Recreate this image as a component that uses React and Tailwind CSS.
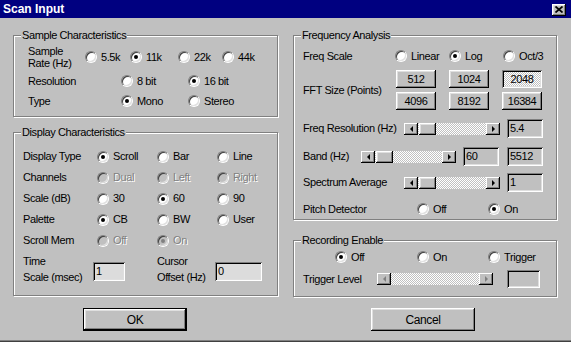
const RAISED =
  "shadow-[inset_-1px_-1px_0_#000,inset_1px_1px_0_#fff,inset_-2px_-2px_0_#808080,inset_2px_2px_0_#dfdfdf]";
const SUNKEN =
  "shadow-[inset_1px_1px_0_#808080,inset_-1px_-1px_0_#fff,inset_2px_2px_0_#000,inset_-2px_-2px_0_#dfdfdf]";
const DITHER =
  "[background-image:repeating-conic-gradient(#fff_0%_25%,#c0c0c0_0%_50%)] [background-size:2px_2px]";
const GREY_TEXT = "text-[#808080] [text-shadow:1px_1px_0_#fff]";

function Radio({ label, checked, disabled, className = "" }) {
  return (
    <div className={"flex items-center gap-[4px] " + className}>
      <span className="relative w-[12px] h-[12px] shrink-0 rounded-full border border-t-[#808080] border-l-[#808080] border-b-white border-r-white">
        <span
          className={
            "absolute inset-0 rounded-full flex items-center justify-center shadow-[inset_1px_1px_0_#404040,inset_-1px_-1px_0_#dfdfdf] " +
            (disabled ? "bg-[#c0c0c0]" : "bg-white")
          }
        >
          {checked && (
            <span
              className={
                "w-[4px] h-[4px] rounded-full " +
                (disabled ? "bg-[#808080]" : "bg-black")
              }
            />
          )}
        </span>
      </span>
      <span className={disabled ? GREY_TEXT : ""}>{label}</span>
    </div>
  );
}

function Group({ title, className = "", children }) {
  return (
    <div
      className={
        "relative border border-[#808080] shadow-[inset_1px_1px_0_#fff,1px_1px_0_#fff] " +
        className
      }
    >
      <span className="absolute left-[7px] -top-[7px] px-[1px] leading-[13px] bg-[#c0c0c0]">
        {title}
      </span>
      {children}
    </div>
  );
}

function Button({ children, pressed, className = "" }) {
  return (
    <div
      className={
        "flex items-center justify-center " +
        (pressed ? SUNKEN + " " + DITHER : RAISED + " bg-[#c0c0c0]") +
        " " +
        className
      }
    >
      {children}
    </div>
  );
}

function Arrow({ dir, disabled }) {
  const tri =
    dir === "left"
      ? "border-y-[3px] border-y-transparent border-r-[3px] " +
        (disabled ? "border-r-[#808080]" : "border-r-black")
      : "border-y-[3px] border-y-transparent border-l-[3px] " +
        (disabled ? "border-l-[#808080]" : "border-l-black");
  return (
    <div
      className={
        "w-[14px] h-full shrink-0 bg-[#c0c0c0] flex items-center justify-center shadow-[inset_-1px_-1px_0_#000,inset_1px_1px_0_#fff,inset_-2px_-2px_0_#808080]"
      }
    >
      <span className={"w-0 h-0 " + tri} />
    </div>
  );
}

function Scroll({ className = "", thumb = true, disabled }) {
  return (
    <div className={"flex h-[12px] " + className}>
      <Arrow dir="left" disabled={disabled} />
      <div className={"flex-1 flex " + DITHER}>
        {thumb && (
          <div className={"w-[17px] h-full ml-[1px] bg-[#c0c0c0] " + RAISED} />
        )}
      </div>
      <Arrow dir="right" disabled={disabled} />
    </div>
  );
}

function Field({ value, className = "" }) {
  return (
    <div className={"flex items-center pl-[3px] " + SUNKEN + " " + className}>
      {value}
    </div>
  );
}

export default function App() {
  return (
    <div className="w-[571px] h-[342px] bg-[#c0c0c0] text-black text-[11px] leading-none tracking-[-0.4px] font-['Liberation_Sans',Arial,sans-serif] overflow-hidden shadow-[inset_0_-1px_0_#404040,inset_0_-2px_0_#808080]">
      {/* title bar */}
      <div className="h-[18px] bg-[#000080] flex items-center justify-between pl-[3px] pr-[5px]">
        <span className="text-white font-bold text-[12px] tracking-normal">
          Scan Input
        </span>
        <div className={"w-[14px] h-[12px] mt-[1px] flex items-center justify-center bg-[#c0c0c0] " + RAISED}>
          <svg width="8" height="7" viewBox="0 0 8 7">
            <path d="M0.5 0.5 L7.5 6.5 M7.5 0.5 L0.5 6.5" stroke="#000" strokeWidth="1.7" />
          </svg>
        </div>
      </div>

      {/* body */}
      <div className="flex items-start gap-[15px] pl-[13px] pt-[17px]">
        {/* left column */}
        <div className="w-[265px] flex flex-col">
          <Group title="Sample Characteristics" className="h-[82px] pl-[14px] pt-[9px]">
            <div className="flex items-center h-[24px]">
              <div className="w-[57px] leading-[12px]">
                Sample
                <br />
                Rate (Hz)
              </div>
              <Radio label="5.5k" className="w-[45px]" />
              <Radio label="11k" checked className="w-[48px]" />
              <Radio label="22k" className="w-[44px]" />
              <Radio label="44k" />
            </div>
            <div className="flex items-center h-[20px] mt-[2px]">
              <div className="w-[93px]">Resolution</div>
              <Radio label="8 bit" className="w-[67px]" />
              <Radio label="16 bit" checked />
            </div>
            <div className="flex items-center h-[20px]">
              <div className="w-[93px]">Type</div>
              <Radio label="Mono" checked className="w-[67px]" />
              <Radio label="Stereo" />
            </div>
          </Group>

          <Group title="Display Characteristics" className="h-[164px] mt-[15px] pl-[9px] pt-[13px]">
            <div className="flex items-center h-[21px]">
              <div className="w-[74px]">Display Type</div>
              <Radio label="Scroll" checked className="w-[60px]" />
              <Radio label="Bar" className="w-[60px]" />
              <Radio label="Line" />
            </div>
            <div className="flex items-center h-[21px]">
              <div className="w-[74px]">Channels</div>
              <Radio label="Dual" disabled className="w-[60px]" />
              <Radio label="Left" disabled className="w-[60px]" />
              <Radio label="Right" disabled />
            </div>
            <div className="flex items-center h-[21px]">
              <div className="w-[74px]">Scale (dB)</div>
              <Radio label="30" className="w-[60px]" />
              <Radio label="60" checked className="w-[60px]" />
              <Radio label="90" />
            </div>
            <div className="flex items-center h-[21px]">
              <div className="w-[74px]">Palette</div>
              <Radio label="CB" checked className="w-[60px]" />
              <Radio label="BW" className="w-[60px]" />
              <Radio label="User" />
            </div>
            <div className="flex items-center h-[21px]">
              <div className="w-[74px]">Scroll Mem</div>
              <Radio label="Off" disabled className="w-[60px]" />
              <Radio label="On" disabled checked />
            </div>
            <div className="flex items-start h-[32px] mt-[2px]">
              <div className="w-[70px] leading-[16px]">
                Time
                <br />
                Scale (msec)
              </div>
              <Field value="1" className="w-[32px] h-[19px] mt-[9px] bg-[#dcdcdc]" />
              <div className="w-[58px] ml-[32px] leading-[16px]">
                Cursor
                <br />
                Offset (Hz)
              </div>
              <Field value="0" className="w-[47px] h-[19px] mt-[9px] bg-[#dcdcdc]" />
            </div>
          </Group>
        </div>

        {/* right column */}
        <div className="w-[264px] flex flex-col">
          <Group title="Frequency Analysis" className="h-[185px] pl-[9px] pt-[10px]">
            <div className="flex items-center h-[20px]">
              <div className="w-[92px]">Freq Scale</div>
              <Radio label="Linear" className="w-[54px]" />
              <Radio label="Log" checked className="w-[54px]" />
              <Radio label="Oct/3" />
            </div>
            <div className="flex items-center mt-[4px]">
              <div className="w-[93px]">FFT Size (Points)</div>
              <div className="grid grid-cols-[40px_40px_40px] gap-x-[13px] gap-y-[4px]">
                <Button className="h-[18px]">512</Button>
                <Button className="h-[18px]">1024</Button>
                <Button className="h-[18px]" pressed>2048</Button>
                <Button className="h-[18px]">4096</Button>
                <Button className="h-[18px]">8192</Button>
                <Button className="h-[18px]">16384</Button>
              </div>
            </div>
            <div className="flex items-center h-[19px] mt-[9px]">
              <div className="w-[101px]">Freq Resolution (Hz)</div>
              <Scroll className="w-[96px]" />
              <Field value="5.4" className="w-[36px] h-[19px] ml-[7px]" />
            </div>
            <div className="flex items-center h-[19px] mt-[9px]">
              <div className="w-[58px]">Band (Hz)</div>
              <Scroll className="w-[95px]" />
              <Field value="60" className="w-[36px] h-[19px] ml-[7px]" />
              <Field value="5512" className="w-[36px] h-[19px] ml-[8px]" />
            </div>
            <div className="flex items-center h-[19px] mt-[7px]">
              <div className="w-[101px]">Spectrum Average</div>
              <Scroll className="w-[96px]" />
              <Field value="1" className="w-[36px] h-[19px] ml-[7px]" />
            </div>
            <div className="flex items-center h-[18px] mt-[8px]">
              <div className="w-[114px]">Pitch Detector</div>
              <Radio label="Off" className="w-[71px]" />
              <Radio label="On" checked />
            </div>
          </Group>

          <Group title="Recording Enable" className="h-[57px] mt-[20px] pl-[9px] pt-[7px]">
            <div className="flex items-center h-[18px]">
              <Radio label="Off" checked className="w-[82px] ml-[32px]" />
              <Radio label="On" className="w-[71px]" />
              <Radio label="Trigger" />
            </div>
            <div className="flex items-center h-[20px] mt-[3px]">
              <div className="w-[74px]">Trigger Level</div>
              <Scroll className="w-[116px]" thumb={false} disabled />
              <Field value="" className="w-[33px] h-[18px] ml-[14px]" />
            </div>
          </Group>
        </div>
      </div>

      {/* buttons */}
      <div className="flex mt-[11px] text-[12px]">
        <div className="ml-[83px] w-[104px] h-[23px] border border-black">
          <Button className="w-full h-full">OK</Button>
        </div>
        <Button className="ml-[184px] w-[104px] h-[23px]">Cancel</Button>
      </div>
    </div>
  );
}
